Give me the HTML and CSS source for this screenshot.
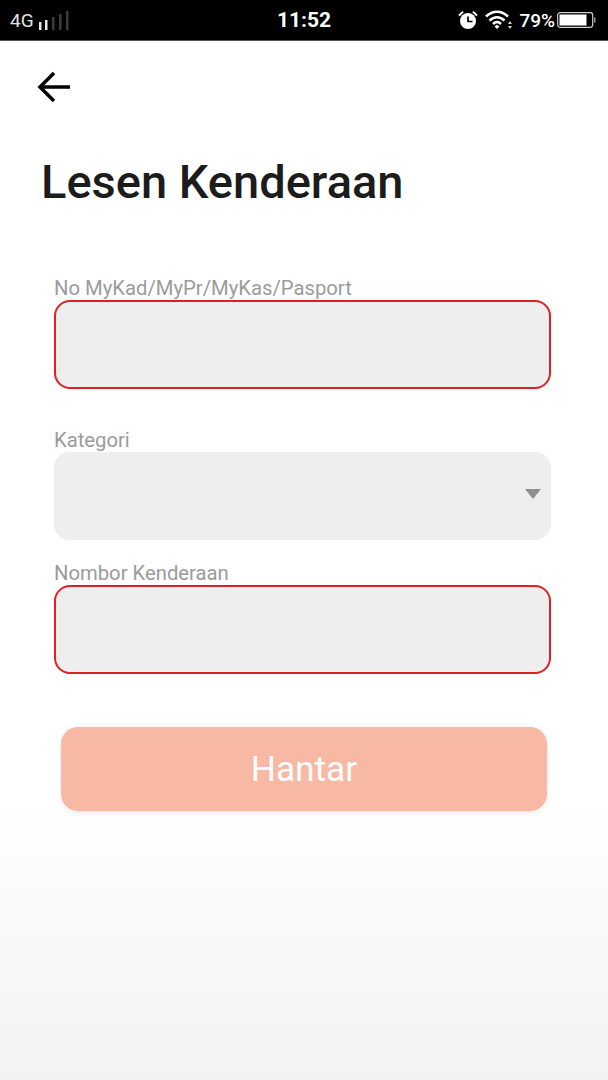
FILE: index.html
```html
<!DOCTYPE html>
<html lang="en">
<head>
    <meta charset="UTF-8">
    <meta name="viewport" content="width=device-width, initial-scale=1.0">
    <title>Lesen Kenderaan</title>
    <link rel="stylesheet" href="styles.css">
</head>
<body>
    <!-- Status Bar -->
    <div class="status_bar">
        <div class="status_left">
            <span class="status_net">4G</span>
            <svg class="status_signal" width="31" height="19" viewBox="0 0 31 19">
                <rect x="0" y="11" width="2.500" height="8" fill="#e8e8e8"/>
                <rect x="6" y="9" width="2.500" height="10" fill="#e8e8e8"/>
                <rect x="13" y="6" width="2.500" height="13" fill="#3c3c3c"/>
                <rect x="20" y="3" width="2.500" height="16" fill="#3c3c3c"/>
                <rect x="27" y="0" width="2.500" height="19" fill="#3c3c3c"/>
            </svg>
        </div>
        <div class="status_time">11:52</div>
        <div class="status_right">
            <svg class="status_alarm" width="20" height="20" viewBox="0 0 20 20">
                <circle cx="10" cy="11" r="8" fill="#fff"/>
                <path d="M10 6.500V11.500H14.500" fill="none" stroke="#000" stroke-width="1.700"/>
                <path d="M1 5.500L5 1.800M19 5.500L15 1.800" stroke="#fff" stroke-width="2" fill="none"/>
            </svg>
            <svg class="status_wifi" width="28" height="20" viewBox="0 0 28 20">
                <path d="M1 6.500C7.500 0 16.500 0 23 6.500" fill="none" stroke="#fff" stroke-width="2.500"/>
                <path d="M4.500 10.500C9 6 15 6 19.500 10.500" fill="none" stroke="#fff" stroke-width="2.500"/>
                <path d="M8 14C10.500 11.500 13.500 11.500 16 14" fill="none" stroke="#fff" stroke-width="2.500"/>
                <path d="M9.500 16.500L12 14.700L14.500 16.500L12 19Z" fill="#fff"/>
                <path d="M25 11L27 14H23ZM25 19L23 16H27Z" fill="#ccc"/>
            </svg>
            <span class="status_batt_text">79%</span>
            <svg width="40" height="18" viewBox="0 0 40 18">
                <rect x="0.700" y="1.700" width="35" height="14.600" rx="2.500" fill="none" stroke="#ccc" stroke-width="1.200"/>
                <rect x="2.500" y="3.500" width="27" height="11" fill="#fff"/>
                <rect x="37" y="6.500" width="1.500" height="5" fill="#999"/>
            </svg>
        </div>
    </div>

    <div class="page">
        <div class="back_row">
            <svg width="36" height="36" viewBox="0 0 36 36">
                <path d="M34 18H5M18 4L4 18L18 32" fill="none" stroke="#000" stroke-width="3.500"/>
            </svg>
        </div>

        <h1 class="title">Lesen Kenderaan</h1>

        <form class="form">
            <div class="field field_first">
                <label class="field_label">No MyKad/MyPr/MyKas/Pasport</label>
                <div class="field_box field_error"></div>
            </div>
            <div class="field field_second">
                <label class="field_label">Kategori</label>
                <div class="field_box">
                    <span class="field_caret"></span>
                </div>
            </div>
            <div class="field field_third">
                <label class="field_label">Nombor Kenderaan</label>
                <div class="field_box field_error"></div>
            </div>
            <button type="button" class="submit_btn">Hantar</button>
        </form>
    </div>
</body>
</html>
```

FILE: styles.css
```css
* {
    margin: 0;
    padding: 0;
    box-sizing: border-box;
    font-family: Roboto, "Liberation Sans", sans-serif;
}

body {
    width: 608px;
    height: 1080px;
    overflow: hidden;
    display: flex;
    flex-direction: column;
    background: linear-gradient(to bottom, #fff 0, #fff 790px, #f2f2f2 1080px);
}

/* Status Bar */
.status_bar {
    height: 41px;
    flex-shrink: 0;
    background: #000;
    border-bottom: 1px solid #555;
    color: #fff;
    display: flex;
    align-items: center;
    justify-content: space-between;
    padding: 0 11px 0 10px;
    position: relative;
}

.status_left {
    display: flex;
    align-items: center;
    gap: 5px;
}

.status_net {
    font-size: 19px;
    color: #e0e0e0;
}

.status_signal {
    margin-top: 1px;
}

.status_time {
    position: absolute;
    left: 277px;
    top: 8px;
    font-size: 21px;
    font-weight: 700;
    line-height: 25px;
}

.status_right {
    display: flex;
    align-items: center;
    gap: 6px;
}

.status_alarm {
    margin-right: 1px;
}

.status_batt_text {
    font-size: 19px;
    font-weight: 500;
    margin-right: -4px;
}

/* Page */
.page {
    flex: 1;
    padding: 0 57px 0 54px;
}

.back_row {
    height: 36px;
    margin: 28px 0 0 -18px;
}

.title {
    font-size: 47px;
    font-weight: 500;
    line-height: 54px;
    color: #1c1c1c;
    margin: 50px 0 0 -13px;
    white-space: nowrap;
}

/* Form */
.form {
    display: flex;
    flex-direction: column;
    margin-top: 69px;
}

.field_label {
    display: block;
    font-size: 20.250px;
    line-height: 20px;
    color: #9b9b9b;
    height: 22px;
}

.field_second {
    margin-top: 41px;
}

.field_third {
    margin-top: 23px;
}

.field_box {
    height: 88px;
    background: #eeeeee;
    border-radius: 16px;
    position: relative;
}

.field_error {
    height: 89px;
    border: 2px solid #e02020;
}

.field_caret {
    position: absolute;
    right: 10px;
    top: 37px;
    width: 0;
    height: 0;
    border-left: 8.500px solid transparent;
    border-right: 8.500px solid transparent;
    border-top: 10px solid #8e8e8e;
}

.submit_btn {
    width: 486px;
    height: 84px;
    margin: 53px 0 0 7px;
    border: none;
    border-radius: 17px;
    background: #f7b8a4;
    color: #fff;
    font-size: 35.300px;
    box-shadow: 0 2px 6px rgba(0, 0, 0, 0.08);
}
```
